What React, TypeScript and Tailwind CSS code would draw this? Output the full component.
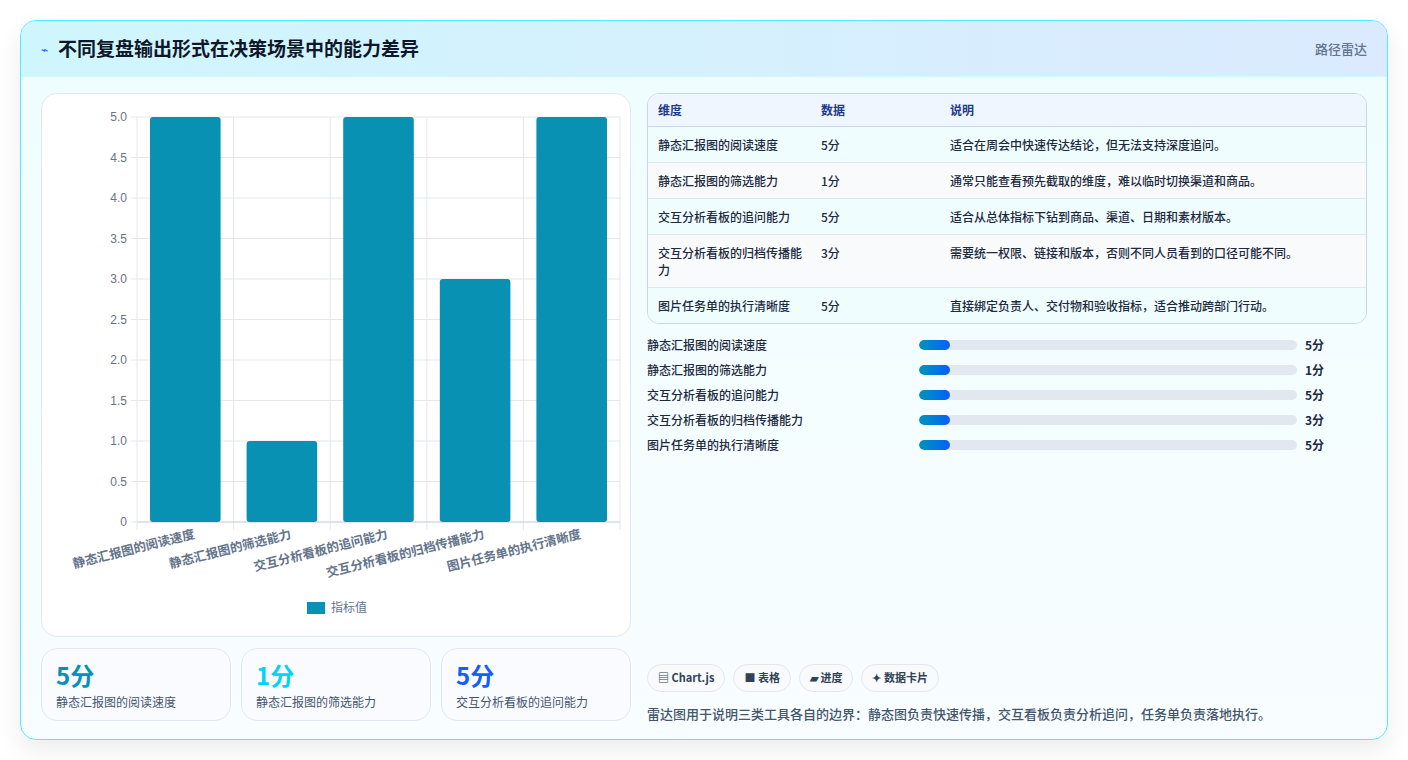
import React from "react";

const cats = ["静态汇报图的阅读速度", "静态汇报图的筛选能力", "交互分析看板的追问能力", "交互分析看板的归档传播能力", "图片任务单的执行清晰度"];
const vals = [5, 1, 5, 3, 5];
const notes = [
  "适合在周会中快速传达结论，但无法支持深度追问。",
  "通常只能查看预先截取的维度，难以临时切换渠道和商品。",
  "适合从总体指标下钻到商品、渠道、日期和素材版本。",
  "需要统一权限、链接和版本，否则不同人员看到的口径可能不同。",
  "直接绑定负责人、交付物和验收指标，适合推动跨部门行动。",
];

function Chart() {
  const x0 = 95, x1 = 578, yTop = 23, yBot = 428;
  const cw = (x1 - x0) / 5;
  const ticks = [0, 0.5, 1, 1.5, 2, 2.5, 3, 3.5, 4, 4.5, 5];
  const y = (v: number) => yBot - (v / 5) * (yBot - yTop);
  return (
    <svg width="590" height="543" className="block" style={{ fontFamily: '"Liberation Sans","Noto Sans CJK SC",sans-serif' }}>
      {ticks.map((t) => (
        <g key={t}>
          <line x1={x0 - 6} x2={x1} y1={y(t)} y2={y(t)} stroke="#e5e7eb" />
          <text x={x0 - 10} y={y(t) + 4} textAnchor="end" fontSize="12" fill="#6b7280">{t === 0 ? "0" : t.toFixed(1)}</text>
        </g>
      ))}
      {[0, 1, 2, 3, 4, 5].map((i) => (
        <line key={i} x1={x0 + i * cw} x2={x0 + i * cw} y1={yTop} y2={yBot + 8} stroke="#e5e7eb" />
      ))}
      <line x1={x0} x2={x1} y1={yBot} y2={yBot} stroke="#cbd5e1" />
      {vals.map((v, i) => (
        <rect key={i} x={x0 + i * cw + 13} y={y(v)} width={cw - 26} height={yBot - y(v)} rx="3" fill="#0891b2" />
      ))}
      {cats.map((c, i) => (
        <text key={c} transform={`translate(${x0 + i * cw + cw / 2 + 10},${yBot + 16}) rotate(-14)`} textAnchor="end" fontSize="12.5" fontWeight="600" fill="#64748b">{c}</text>
      ))}
      <rect x="265" y="508" width="18" height="12" fill="#0891b2" />
      <text x="289" y="518" fontSize="12" fill="#64748b">指标值</text>
    </svg>
  );
}

export default function App() {
  return (
    <div className="min-h-[760px] bg-white p-5" style={{ fontFamily: '"Noto Sans CJK SC","Noto Sans",sans-serif' }}>
      <div className="h-[720px] rounded-2xl border border-cyan-300 overflow-hidden flex flex-col shadow-[0_10px_25px_rgba(0,0,0,0.08)] bg-gradient-to-b from-[#effdff] to-[#f8fdff]">
        <div className="h-14 shrink-0 flex items-center justify-between px-5 bg-gradient-to-r from-[#cff6fd] to-[#dbeafe] border-b border-cyan-100">
          <div className="flex items-center gap-2.5">
            <span className="text-blue-600 text-xs">⌁</span>
            <span className="text-[19px] font-bold text-[#0f172a]">不同复盘输出形式在决策场景中的能力差异</span>
          </div>
          <span className="text-[13px] text-slate-500 font-medium">路径雷达</span>
        </div>
        <div className="flex-1 flex gap-4 px-5 pt-4 pb-4">
          <div className="w-[590px] flex flex-col gap-[11px]">
            <div className="h-[544px] rounded-2xl border border-slate-200 bg-white overflow-hidden">
              <Chart />
            </div>
            <div className="grid grid-cols-3 gap-[10px]">
              {[["5分", "text-cyan-600", cats[0]], ["1分", "text-cyan-400", cats[1]], ["5分", "text-blue-600", cats[2]]].map(([v, c, l], i) => (
                <div key={i} className="h-[73px] rounded-2xl border border-slate-200 bg-[#f9fbff] px-3.5 pt-2.5">
                  <div className={`text-[24px] leading-8 font-bold ${c}`}>{v}</div>
                  <div className="text-[12px] text-slate-600 mt-0.5">{l}</div>
                </div>
              ))}
            </div>
          </div>
          <div className="flex-1 flex flex-col">
            <div className="rounded-xl border border-slate-300 overflow-hidden bg-white text-[12px] text-slate-800">
              <div className="flex h-[33px] items-center bg-[#eff6ff] border-b border-slate-300 font-bold text-[#1e3a8a]">
                <div className="w-[173px] pl-2.5">维度</div>
                <div className="w-[129px]">数据</div>
                <div className="flex-1">说明</div>
              </div>
              {cats.map((c, i) => (
                <div key={c} className={`flex py-[9px] leading-[17px] font-medium ${i < 4 ? "border-b border-slate-200" : ""} ${i % 2 ? "bg-[#f8fafc]" : "bg-[#f0fdff]"}`}>
                  <div className="w-[173px] pl-2.5 pr-3">{c}</div>
                  <div className="w-[129px]">{vals[i]}分</div>
                  <div className="flex-1">{notes[i]}</div>
                </div>
              ))}
            </div>
            <div className="mt-3 flex flex-col gap-[7px] text-[12px] font-medium text-slate-800">
              {cats.map((c, i) => (
                <div key={c} className="flex items-center h-[18px]">
                  <div className="w-[272px]">{c}</div>
                  <div className="w-[378px] h-2.5 rounded-full bg-slate-200 overflow-hidden">
                    <div className="w-[31px] h-full rounded-full bg-gradient-to-r from-cyan-600 to-blue-600" />
                  </div>
                  <div className="ml-2 font-bold">{vals[i]}分</div>
                </div>
              ))}
            </div>
            <div className="mt-auto">
              <div className="flex gap-2 text-[11px] font-bold text-slate-700">
                {["▤ Chart.js", "■ 表格", "▰ 进度", "✦ 数据卡片"].map((t) => (
                  <span key={t} className="h-7 px-2.5 flex items-center rounded-full border border-slate-200 bg-[#f8fafc]">{t}</span>
                ))}
              </div>
              <div className="mt-3 text-[13px] text-slate-600 font-medium">雷达图用于说明三类工具各自的边界：静态图负责快速传播，交互看板负责分析追问，任务单负责落地执行。</div>
            </div>
          </div>
        </div>
      </div>
    </div>
  );
}
